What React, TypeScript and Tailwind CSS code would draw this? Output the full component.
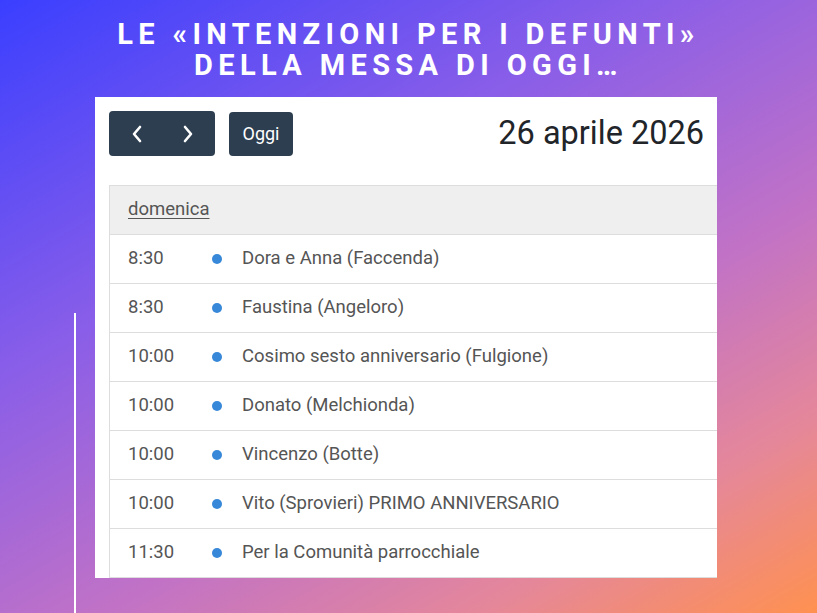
type Intention = {
  id: number
  time: string
  title: string
}

const intentions: Intention[] = [
  { id: 1, time: '8:30', title: 'Dora e Anna (Faccenda)' },
  { id: 2, time: '8:30', title: 'Faustina (Angeloro)' },
  { id: 3, time: '10:00', title: 'Cosimo sesto anniversario (Fulgione)' },
  { id: 4, time: '10:00', title: 'Donato (Melchionda)' },
  { id: 5, time: '10:00', title: 'Vincenzo (Botte)' },
  { id: 6, time: '10:00', title: 'Vito (Sprovieri) PRIMO ANNIVERSARIO' },
  { id: 7, time: '11:30', title: 'Per la Comunità parrocchiale' },
]

function ChevronLeft() {
  return (
    <svg width="12" height="18" viewBox="0 0 12 18" fill="none">
      <path d="M9 2 L3 9 L9 16" stroke="white" strokeWidth="2.6" strokeLinecap="round" strokeLinejoin="round" />
    </svg>
  )
}

function ChevronRight() {
  return (
    <svg width="12" height="18" viewBox="0 0 12 18" fill="none">
      <path d="M3 2 L9 9 L3 16" stroke="white" strokeWidth="2.6" strokeLinecap="round" strokeLinejoin="round" />
    </svg>
  )
}

export default function App() {
  return (
    <div className="relative h-[613px] w-[817px] overflow-hidden bg-[linear-gradient(150deg,#3a3fff_0%,#8a5ee8_35%,#c172c6_62%,#e5879a_82%,#ff9150_100%)] font-['Roboto',sans-serif]">
      {/* decorative vertical line */}
      <div className="absolute left-[74px] top-[313px] h-[300px] w-[2px] bg-white" />

      <h1 className="pt-[19px] text-center text-[29px] font-bold uppercase leading-[31px] tracking-[0.185em] text-white">
        <span className="block">Le «intenzioni per i defunti»</span>
        <span className="block">della messa di oggi…</span>
      </h1>

      <section className="ml-[95px] mt-[16px] h-[481px] w-[622px] overflow-hidden bg-white pl-[14px] pt-[14px]">
        <div className="flex items-center pr-[13px]">
          <div className="flex h-[45px] w-[106px] items-center rounded-[4px] bg-[#2c3e50]">
            <span className="flex w-[53px] justify-center pl-[2px]">
              <ChevronLeft />
            </span>
            <span className="flex w-[53px] justify-center pr-[2px]">
              <ChevronRight />
            </span>
          </div>
          <div className="ml-[14px] flex h-[44px] w-[64px] items-center justify-center rounded-[4px] bg-[#2c3e50] text-[18px] text-white">
            Oggi
          </div>
          <h2 className="ml-auto text-[32.5px] leading-none text-[#212529]">26 aprile 2026</h2>
        </div>

        <div className="mt-[29px] w-[660px] border-l border-t border-[#dddddd]">
          <div className="flex h-[49px] items-center border-b border-[#dddddd] bg-[#efefef] pl-[18px] text-[18.5px] text-[#555555]">
            <span className="underline decoration-1 underline-offset-[3px]">domenica</span>
          </div>
          {intentions.map((item) => (
            <div key={item.id} className="flex h-[49px] items-center border-b border-[#dddddd] text-[18.5px] text-[#555555]">
              <span className="w-[84px] pl-[18px]">{item.time}</span>
              <span className="flex w-[46px] justify-center">
                <span className="h-[10px] w-[10px] rounded-full bg-[#3788d8]" />
              </span>
              <span className="pl-[2px]">{item.title}</span>
            </div>
          ))}
        </div>
      </section>
    </div>
  )
}
